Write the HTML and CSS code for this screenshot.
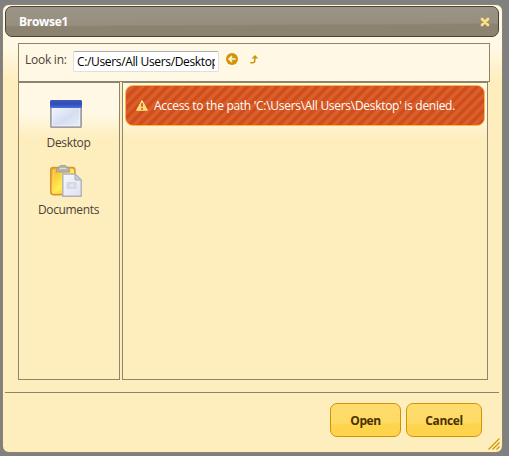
FILE: index.html
```html
<!DOCTYPE html>
<html lang="en">
<head>
<meta charset="utf-8">
<title>Browse1</title>
<link rel="stylesheet" href="styles.css">
</head>
<body>
<div class="dialog">
  <div class="titlebar">
    <span class="title">Browse1</span>
    <svg class="close" width="10" height="10" viewBox="0 0 10 10"><path d="M2 2L8 8M8 2L2 8" stroke="#ffdf7e" stroke-width="2.8" stroke-linecap="round"/></svg>
  </div>
  <div class="content">
    <div class="toolbar">
      <label class="look" for="path">Look in:</label>
      <div class="path" id="path"><span>C:/Users/All Users/Desktop</span></div>
      <svg class="back" width="12" height="12" viewBox="0 0 12 12"><circle cx="6" cy="6" r="6" fill="#d19405"/><path d="M9.5 6H3.5M6 3.2L3.2 6L6 8.8" fill="none" stroke="#fff8e4" stroke-width="1.7"/></svg>
      <svg class="up" width="9" height="9" viewBox="0 0 9 9"><path d="M0.3 7.8H2.5Q4.8 7.8 4.8 5.5V2" fill="none" stroke="#d19405" stroke-width="1.5"/><path d="M1.5 3.6L5 0L8.3 3.6Z" fill="#d19405"/></svg>
    </div>
    <div class="panes">
      <div class="places">
        <div class="place">
          <svg width="32" height="28" viewBox="0 0 32 28">
            <defs>
              <linearGradient id="bar" x2="0" y2="1"><stop offset="0" stop-color="#4058b8"/><stop offset=".5" stop-color="#304cb8"/><stop offset="1" stop-color="#4872dc"/></linearGradient>
              <linearGradient id="pane" x2="1" y2="1"><stop offset="0" stop-color="#f1f4fa"/><stop offset=".55" stop-color="#d5def1"/><stop offset="1" stop-color="#e6edf8"/></linearGradient>
            </defs>
            <rect x=".9" y="1" width="30.2" height="26.2" rx="1" fill="#f7f8fb" stroke="#a19fa4" stroke-width="1.8"/>
            <rect x="2.5" y="8" width="27" height="17.5" fill="url(#pane)"/>
            <rect y="0" width="32" height="8" rx="1.5" fill="url(#bar)"/>
          </svg>
          <span class="desktop">Desktop</span>
        </div>
        <div class="place">
          <svg width="32" height="32" viewBox="0 0 32 32">
            <defs>
              <linearGradient id="clip" x2="1" y2="1"><stop offset="0" stop-color="#f6ae28"/><stop offset=".55" stop-color="#fff052"/><stop offset="1" stop-color="#f3a82d"/></linearGradient>
              <linearGradient id="sheet" x2="1" y2="1"><stop offset="0" stop-color="#f7f8fd"/><stop offset="1" stop-color="#dfe3f1"/></linearGradient>
            </defs>
            <rect x=".8" y="2.6" width="24" height="27" rx="2.5" fill="url(#clip)" stroke="#d9962f" stroke-width="1.6"/>
            <path d="M3.5 5V27H12" fill="none" stroke="#ffd36a"/>
            <path d="M6.5 7V4.5Q6.5 3 9 3Q9 .5 11 .5H15Q17 .5 17 3Q19.5 3 19.5 4.5V7Z" fill="#b4b2ad" stroke="#9a9a94" stroke-width=".8"/>
            <path d="M9.5 3.5H16.5" stroke="#ddd" stroke-width="1.2"/>
            <path d="M12.8 9H25L31.2 15V31.2H12.8Z" fill="url(#sheet)" stroke="#aeb1bc" stroke-width="1.4"/>
            <path d="M25 9V15H31.2Z" fill="#c4c9d6" stroke="#aeb1bc"/>
            <rect x="16.5" y="17" width="10" height="7" fill="#d3d8e4"/><rect x="20" y="19" width="3.5" height="3" fill="#e6e9f2"/>
          </svg>
          <span class="documents">Documents</span>
        </div>
      </div>
      <div class="files">
        <div class="error">
          <svg width="12" height="11" viewBox="0 0 12 11"><path d="M6 .8L11.2 10.2H.8Z" fill="#ffdf7e" stroke="#ffdf7e" stroke-width="1.3" stroke-linejoin="round"/><path d="M6 3.3V6.7M6 8V9.7" stroke="#d5501c" stroke-width="1.7"/></svg>
          <span class="message">Access to the path 'C:\Users\All Users\Desktop' is denied.</span>
        </div>
      </div>
    </div>
  </div>
  <div class="buttons">
    <div class="button open"><span>Open</span></div>
    <div class="button cancel"><span>Cancel</span></div>
  </div>
  <svg class="grip" width="12" height="12" viewBox="0 0 12 12"><path d="M.5 11.5L11.5 .5M4.5 11.5L11.5 4.5M8.5 11.5L11.5 8.5" stroke="#d19405" stroke-width="1.2"/></svg>
</div>
</body>
</html>
```
FILE: styles.css
```css
* { box-sizing: border-box; }
body {
  margin: 0;
  height: 456px;
  overflow: hidden;
  padding: 4px 6px 4px 2px;
  background: #808080;
  font: 12px "Open Sans", "Noto Sans", sans-serif;
  color: #4c3f38;
  white-space: nowrap;
}
svg { display: block; flex: none; }
.dialog {
  position: relative;
  height: 449px;
  padding: 1px 3px 1px 2px;
  border: 1px solid #8e846b;
  border-radius: 7px;
  background: linear-gradient(#fff8e4 0, #fff8e4 43px, #feeebd 76px);
}
.titlebar {
  display: flex;
  align-items: center;
  justify-content: space-between;
  height: 31px;
  padding: 0 8px 0 13px;
  border: 1px solid #494437;
  border-radius: 7px;
  background: linear-gradient(179.7deg, #9c9586 0, #968e7f 58%, #8b826f 64%, #8b826f 100%);
}
.title { color: #fff; font-weight: 700; letter-spacing: -.3px; }
.content {
  height: 356px;
  padding: 6px 9px 0 13px;
  border-bottom: 1px solid #8e846b;
}
.toolbar {
  display: flex;
  height: 39px;
  border: 1px solid #8e846b;
  background: #fff8e4;
}
.look { margin: 7px 0 0 6px; width: 48px; line-height: 18px; letter-spacing: -.25px; }
.path {
  width: 146px;
  height: 21px;
  margin-top: 7px;
  padding: 0 3px;
  border: 1px solid #dbdfe6;
  border-top-color: #abadb3;
  border-radius: 2px;
  background: #fff;
  color: #000;
  line-height: 20px;
}
.path span { display: block; overflow: hidden; letter-spacing: -.35px; }
.back { margin: 9px 0 0 7px; }
.up { margin: 11px 0 0 12px; }
.panes { display: flex; gap: 2px; height: 298px; margin-right: 2px; }
.places, .files {
  border: 1px solid #8e846b;
  background: linear-gradient(#fff8e4 0, #fff8e4 31px, #feeebd 56px);
}
.places { display: flex; flex-direction: column; align-items: center; width: 102px; padding-top: 17px; }
.place { display: flex; flex-direction: column; align-items: center; height: 65px; }
.place svg { margin-right: 6px; }
.place span { line-height: 18px; margin: 6px 1px 0 0; letter-spacing: -.35px; }
.place + .place span { margin-top: 4px; }
.files { flex: 1; padding: 2px; }
.error {
  display: flex;
  align-items: center;
  height: 41px;
  padding-left: 10px;
  border: 1px solid #ffb73d;
  border-radius: 8px;
  background: repeating-linear-gradient(135deg, #d34d17 0, #d34d17 3.5px, #d85f2f 3.5px, #d85f2f 7.07px);
  color: #fff;
}
.message { margin-left: 6px; letter-spacing: -.29px; }
.buttons { display: flex; justify-content: flex-end; gap: 5px; padding: 10px 17px 0 0; }
.button {
  display: flex;
  align-items: center;
  justify-content: center;
  width: 71px;
  height: 34px;
  border: 1px solid #d19405;
  border-radius: 7px;
  background: linear-gradient(179deg, #fedc6e 0, #fedb65 58%, #fed44d 64%, #fed44d 100%);
  color: #4c3000;
  font-weight: 700;
  letter-spacing: -.4px;
}
.cancel { width: 76px; }
.grip { position: absolute; right: 2px; bottom: 2px; }
```
